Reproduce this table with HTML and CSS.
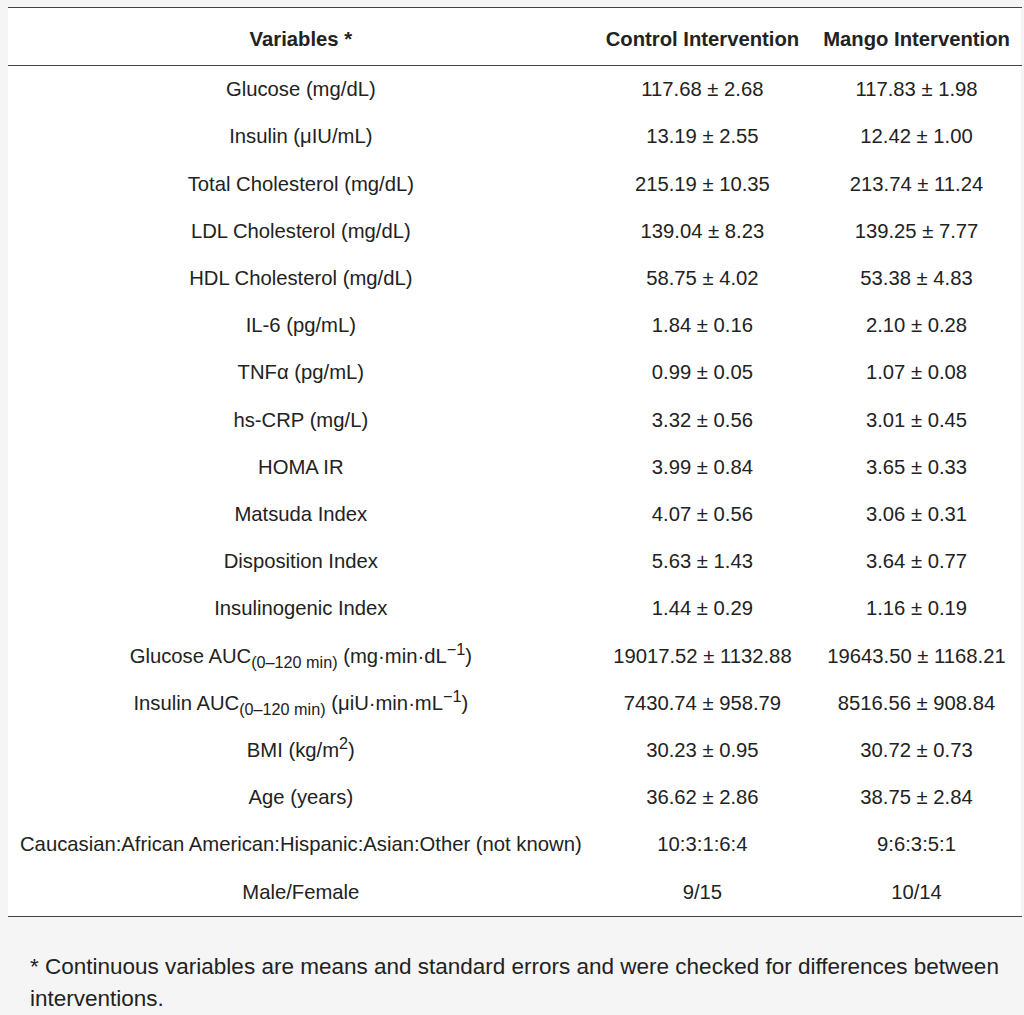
FILE: index.html
```html
<!DOCTYPE html>
<html>
<head>
<meta charset="utf-8">
<link rel="stylesheet" href="styles.css">
</head>
<body>
<div class="table-wrap">
<table class="data">
<thead>
<tr><th>Variables *</th><th>Control Intervention</th><th>Mango Intervention</th></tr>
</thead>
<tbody>
<tr><td>Glucose (mg/dL)</td><td>117.68 ± 2.68</td><td>117.83 ± 1.98</td></tr>
<tr><td>Insulin (μIU/mL)</td><td>13.19 ± 2.55</td><td>12.42 ± 1.00</td></tr>
<tr><td>Total Cholesterol (mg/dL)</td><td>215.19 ± 10.35</td><td>213.74 ± 11.24</td></tr>
<tr><td>LDL Cholesterol (mg/dL)</td><td>139.04 ± 8.23</td><td>139.25 ± 7.77</td></tr>
<tr><td>HDL Cholesterol (mg/dL)</td><td>58.75 ± 4.02</td><td>53.38 ± 4.83</td></tr>
<tr><td>IL-6 (pg/mL)</td><td>1.84 ± 0.16</td><td>2.10 ± 0.28</td></tr>
<tr><td>TNFα (pg/mL)</td><td>0.99 ± 0.05</td><td>1.07 ± 0.08</td></tr>
<tr><td>hs-CRP (mg/L)</td><td>3.32 ± 0.56</td><td>3.01 ± 0.45</td></tr>
<tr><td>HOMA IR</td><td>3.99 ± 0.84</td><td>3.65 ± 0.33</td></tr>
<tr><td>Matsuda Index</td><td>4.07 ± 0.56</td><td>3.06 ± 0.31</td></tr>
<tr><td>Disposition Index</td><td>5.63 ± 1.43</td><td>3.64 ± 0.77</td></tr>
<tr><td>Insulinogenic Index</td><td>1.44 ± 0.29</td><td>1.16 ± 0.19</td></tr>
<tr><td>Glucose AUC<sub>(0–120 min)</sub> (mg·min·dL<sup>−1</sup>)</td><td>19017.52 ± 1132.88</td><td>19643.50 ± 1168.21</td></tr>
<tr><td>Insulin AUC<sub>(0–120 min)</sub> (μiU·min·mL<sup>−1</sup>)</td><td>7430.74 ± 958.79</td><td>8516.56 ± 908.84</td></tr>
<tr><td>BMI (kg/m<sup>2</sup>)</td><td>30.23 ± 0.95</td><td>30.72 ± 0.73</td></tr>
<tr><td>Age (years)</td><td>36.62 ± 2.86</td><td>38.75 ± 2.84</td></tr>
<tr><td>Caucasian:African American:Hispanic:Asian:Other (not known)</td><td>10:3:1:6:4</td><td>9:6:3:5:1</td></tr>
<tr><td>Male/Female</td><td>9/15</td><td>10/14</td></tr>
</tbody>
</table>
</div>
<p class="note">* Continuous variables are means and standard errors and were checked for differences between interventions.</p>
</body>
</html>
```
FILE: styles.css
```css
html, body {
  margin: 0;
  padding: 0;
}
body {
  background: #f5f5f5;
  font-family: "Liberation Sans", Arial, sans-serif;
  color: #222;
  padding: 7px 0 0 8px;
}
.table-wrap {
  width: 1013px;
  background: #fff;
}
.data {
  width: 100%;
  border-collapse: collapse;
  font-size: 20.25px;
  border-top: 1px solid #444;
  border-bottom: 1px solid #444;
}
.data th, .data td {
  text-align: center;
  padding: 12px 12px;
  line-height: 23.2px;
  white-space: nowrap;
}
.data th {
  font-weight: bold;
  padding: 20px 12px 14px;
  border-bottom: 1px solid #444;
}
.data sub, .data sup {
  font-size: 80%;
  line-height: 0;
}
.note {
  margin: 0;
  padding: 34px 16px 0 22px;
  font-size: 22.5px;
  line-height: 32px;
  color: #222;
}
```
